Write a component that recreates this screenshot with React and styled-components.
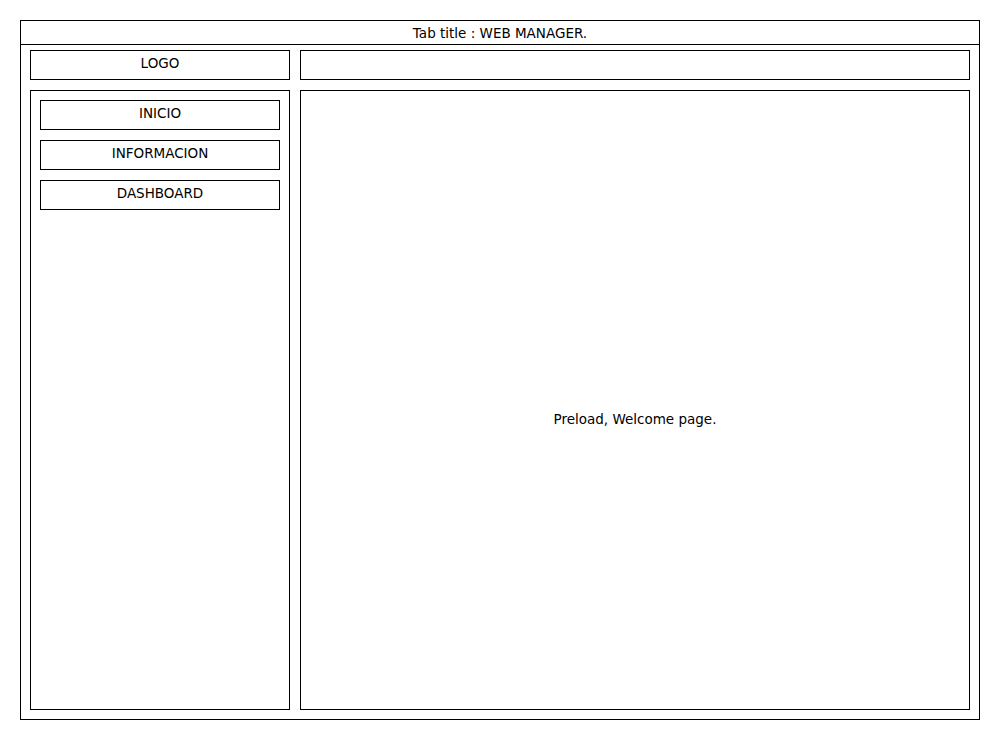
import React from "react";
import styled, { createGlobalStyle } from "styled-components";

const menuItems = ["INICIO", "INFORMACION", "DASHBOARD"];

function App() {
  return (
    <>
      <GlobalStyle />
      <Frame>
        <TitleBar>Tab title : WEB MANAGER.</TitleBar>
        <Layout>
          <Box>LOGO</Box>
          <Box />
          <Sidebar>
            {menuItems.map((item) => (
              <MenuButton key={item}>{item}</MenuButton>
            ))}
          </Sidebar>
          <Content>Preload, Welcome page.</Content>
        </Layout>
      </Frame>
    </>
  );
}

const GlobalStyle = createGlobalStyle`
  * {
    box-sizing: border-box;
  }
  body {
    margin: 0;
    padding: 20px;
    background: #ffffff;
    color: #000000;
    font-family: "DejaVu Sans", "Liberation Sans", sans-serif;
    font-size: 13.5px;
  }
`;

const Frame = styled.div`
  border: 1px solid #000;
  display: flex;
  flex-direction: column;
  height: 700px;
  width: 960px;
`;

const TitleBar = styled.div`
  border-bottom: 1px solid #000;
  height: 24px;
  line-height: 22px;
  padding-top: 1px;
  text-align: center;
`;

const Layout = styled.div`
  display: grid;
  flex: 1;
  gap: 10px;
  grid-template-columns: 260px 1fr;
  grid-template-rows: 30px 1fr;
  padding: 5px 9px 9px;
`;

const Box = styled.div`
  border: 1px solid #000;
  line-height: 22px;
  padding-top: 1px;
  text-align: center;
`;

const Sidebar = styled.nav`
  border: 1px solid #000;
  display: flex;
  flex-direction: column;
  gap: 10px;
  padding: 9px;
`;

const MenuButton = styled.div`
  border: 1px solid #000;
  height: 30px;
  line-height: 22px;
  padding-top: 1px;
  text-align: center;
`;

const Content = styled.main`
  align-items: center;
  border: 1px solid #000;
  display: flex;
  justify-content: center;
  padding-top: 38px;
`;

export default App;
